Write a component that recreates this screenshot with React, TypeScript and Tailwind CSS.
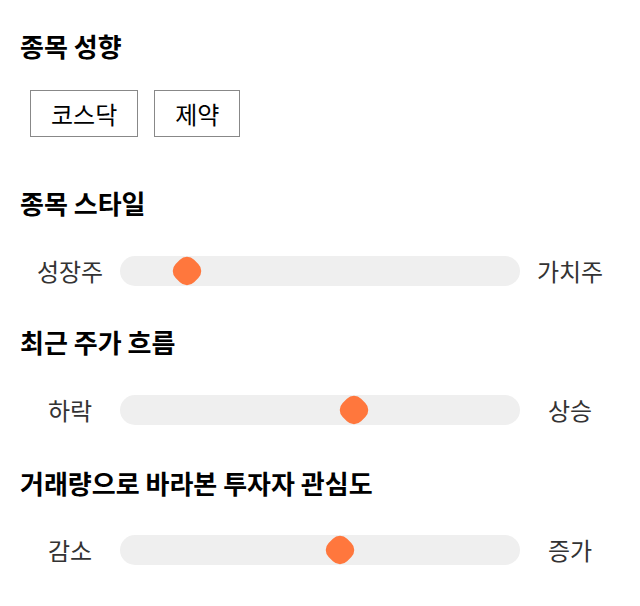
import React from "react";

const font = { fontFamily: '"Noto Sans CJK KR", "Noto Sans", sans-serif' };

function Heading({ children, className = "" }: { children: React.ReactNode; className?: string }) {
  return <h2 className={`text-[26px] leading-[32px] font-bold text-black ${className}`}>{children}</h2>;
}

function Slider({ left, right, value, className = "" }: { left: string; right: string; value: number; className?: string }) {
  return (
    <div className={`flex items-center ${className}`}>
      <span className="w-[100px] shrink-0 text-center text-[24px] leading-[30px] text-[#333]">{left}</span>
      <div className="relative h-[30px] flex-1 rounded-full bg-[#efefef]">
        <span
          className="absolute top-1/2 h-[26px] w-[26px] -translate-x-1/2 -translate-y-1/2 rotate-45 rounded-[10px] bg-[#ff773d]"
          style={{ left: `${value}%` }}
        />
      </div>
      <span className="w-[100px] shrink-0 text-center text-[24px] leading-[30px] text-[#333]">{right}</span>
    </div>
  );
}

export default function App() {
  const tags = ["코스닥", "제약"];
  return (
    <div className="min-h-[606px] w-[640px] bg-white px-5 pt-[30px]" style={font}>
      <Heading>종목 성향</Heading>
      <div className="mt-[28px] ml-[10px] flex gap-4">
        {tags.map((t) => (
          <button
            key={t}
            className="h-[47px] border border-[#888] bg-white px-[20px] text-[24px] leading-[30px] text-black"
          >
            {t}
          </button>
        ))}
      </div>

      <Heading className="mt-[50px]">종목 스타일</Heading>
      <Slider className="mt-[37px]" left="성장주" right="가치주" value={16.8} />

      <Heading className="mt-[40px]">최근 주가 흐름</Heading>
      <Slider className="mt-[37px]" left="하락" right="상승" value={58.4} />

      <Heading className="mt-[42px]">거래량으로 바라본 투자자 관심도</Heading>
      <Slider className="mt-[36px]" left="감소" right="증가" value={54.9} />
    </div>
  );
}
